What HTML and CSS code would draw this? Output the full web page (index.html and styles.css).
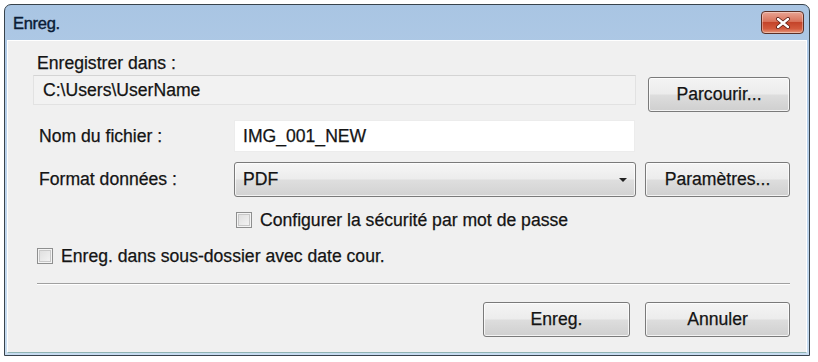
FILE: index.html
```html
<!DOCTYPE html>
<html lang="fr">
<head>
    <meta charset="UTF-8">
    <title>Enreg.</title>
    <link rel="stylesheet" href="styles.css">
</head>
<body>
    <div class="window">
        <div class="titlebar">
            <span class="title">Enreg.</span>
            <button class="close" type="button" aria-label="Fermer">
                <svg width="16" height="12" viewBox="0 0 16 12">
                    <path d="M3 2 L13 10 M13 2 L3 10" stroke="#5a1a10" stroke-width="4" stroke-linecap="round"/>
                    <path d="M3 2 L13 10 M13 2 L3 10" stroke="#fff" stroke-width="2.4" stroke-linecap="round"/>
                </svg>
            </button>
        </div>

        <div class="client">
            <label class="label-top">Enregistrer dans :</label>
            <div class="path-row">
                <div class="path-field">C:\Users\UserName</div>
                <button class="btn btn-path" type="button">Parcourir...</button>
            </div>

            <div class="form-grid">
                <label class="label" for="filename">Nom du fichier :</label>
                <input class="text-field" id="filename" type="text" value="IMG_001_NEW">
                <span></span>

                <label class="label">Format données :</label>
                <div class="select">
                    <span>PDF</span>
                    <span class="arrow"></span>
                </div>
                <button class="btn" type="button">Paramètres...</button>

                <span></span>
                <label class="check check-pass">
                    <span class="box"></span>
                    Configurer la sécurité par mot de passe
                </label>
                <span></span>
            </div>

            <label class="check check-date">
                <span class="box"></span>
                Enreg. dans sous-dossier avec date cour.
            </label>

            <hr class="separator">

            <div class="actions">
                <button class="btn btn-save" type="button">Enreg.</button>
                <button class="btn btn-cancel" type="button">Annuler</button>
            </div>
        </div>
    </div>
</body>
</html>
```

FILE: styles.css
```css
*{
    margin:0;
    padding:0;
    box-sizing:border-box;
}
body {
    background-color:#fff;
    font-family:'Liberation Sans', Arial, sans-serif;
    font-size:17.6px;
    color:#141414;
    -webkit-text-stroke:0.25px #141414;
}
.window {
    width:806px;
    height:352px;
    margin:4px 0 0 4px;
    border:1px solid #38434c;
    border-radius:7px 7px 0 0;
    background:linear-gradient(#a9c5e3, #bdd4ec 55%, #c7dcf0);
    display:flex;
    flex-direction:column;
}
.titlebar {
    height:35px;
    display:flex;
    justify-content:space-between;
    align-items:flex-start;
    padding:0 5px 0 8px;
}
.title {
    margin-top:9px;
    font-size:16.5px;
    color:#0a1c36;
    -webkit-text-stroke:0.4px #0a1c36;
    letter-spacing:-0.3px;
}
.close {
    margin-top:6px;
    width:43px;
    height:23px;
    border:1px solid #5b3026;
    border-radius:4px;
    background:linear-gradient(#e8a493, #d9735b 45%, #c4442a 50%, #d35a3d 80%, #e59a7d);
    box-shadow:inset 0 0 0 1px rgba(255,255,255,0.35);
    display:flex;
    align-items:center;
    justify-content:center;
}
.client {
    flex:1;
    margin:0 2px 2px 2px;
    background-color:#f0f0f0;
    border:1px solid #fff;
    border-bottom-color:#8fb3b3;
    padding:11px 16px 0 29px;
    display:flex;
    flex-direction:column;
}
.label-top {
    height:22px;
    line-height:22px;
}
.path-row {
    display:flex;
    align-items:flex-start;
    gap:9px;
    margin-top:1px;
    height:30px;
}
.path-field {
    width:603px;
    height:30px;
    margin-left:-4px;
    padding-left:9px;
    line-height:28px;
    border:1px solid #e2e2e2;
    border-top-color:#d4d4d4;
    background-color:#f2f2f2;
}
.btn-path {
    width:142px;
    height:31px;
    margin-top:2px;
    margin-left:3px;
}
.form-grid {
    margin-top:15px;
    display:grid;
    grid-template-columns:188px 402px 145px;
    column-gap:9px;
    row-gap:10px;
    align-items:center;
}
.label {
    padding-left:2px;
}
.text-field {
    height:32px;
    width:401px;
    border:1px solid #ececec;
    background:#fff;
    padding-left:8px;
    font:inherit;
    color:inherit;
    outline:none;
}
.select {
    height:35px;
    border:1px solid #7a7a7a;
    border-radius:3px;
    background:linear-gradient(#f6f6f6, #ececec 48%, #dedede 52%, #d2d2d2);
    box-shadow:inset 0 0 0 1px rgba(255,255,255,0.7);
    display:flex;
    align-items:center;
    justify-content:space-between;
    padding:0 8px 0 8px;
}
.arrow {
    width:0;
    height:0;
    border-left:4px solid transparent;
    border-right:4px solid transparent;
    border-top:4px solid #222;
    margin-top:1px;
}
.btn {
    font:inherit;
    color:#141414;
    height:35px;
    border:1px solid #7a7a7a;
    border-radius:3px;
    background:linear-gradient(#f4f4f4, #ececec 48%, #dddddd 52%, #cfcfcf);
    box-shadow:inset 0 0 0 1px rgba(255,255,255,0.75);
    cursor:pointer;
}
.check {
    display:flex;
    align-items:center;
    gap:8px;
    height:22px;
}
.check-pass {
    margin:2px 0 0 2px;
}
.check-date {
    margin-top:14px;
}
.box {
    width:16px;
    height:16px;
    border:1px solid #8e8f8f;
    background:linear-gradient(135deg, #dcdcdc, #f6f6f6);
    box-shadow:inset 0 0 0 1px #f4f4f4, inset 0 0 0 2px #c8c8c8;
}
.separator {
    margin-top:16px;
    border:none;
    border-top:1px solid #a0a0a0;
    border-bottom:1px solid #fff;
}
.actions {
    display:flex;
    justify-content:flex-end;
    gap:15px;
    margin-top:17px;
}
.btn-save {
    width:147px;
}
.btn-cancel {
    width:145px;
}
```
